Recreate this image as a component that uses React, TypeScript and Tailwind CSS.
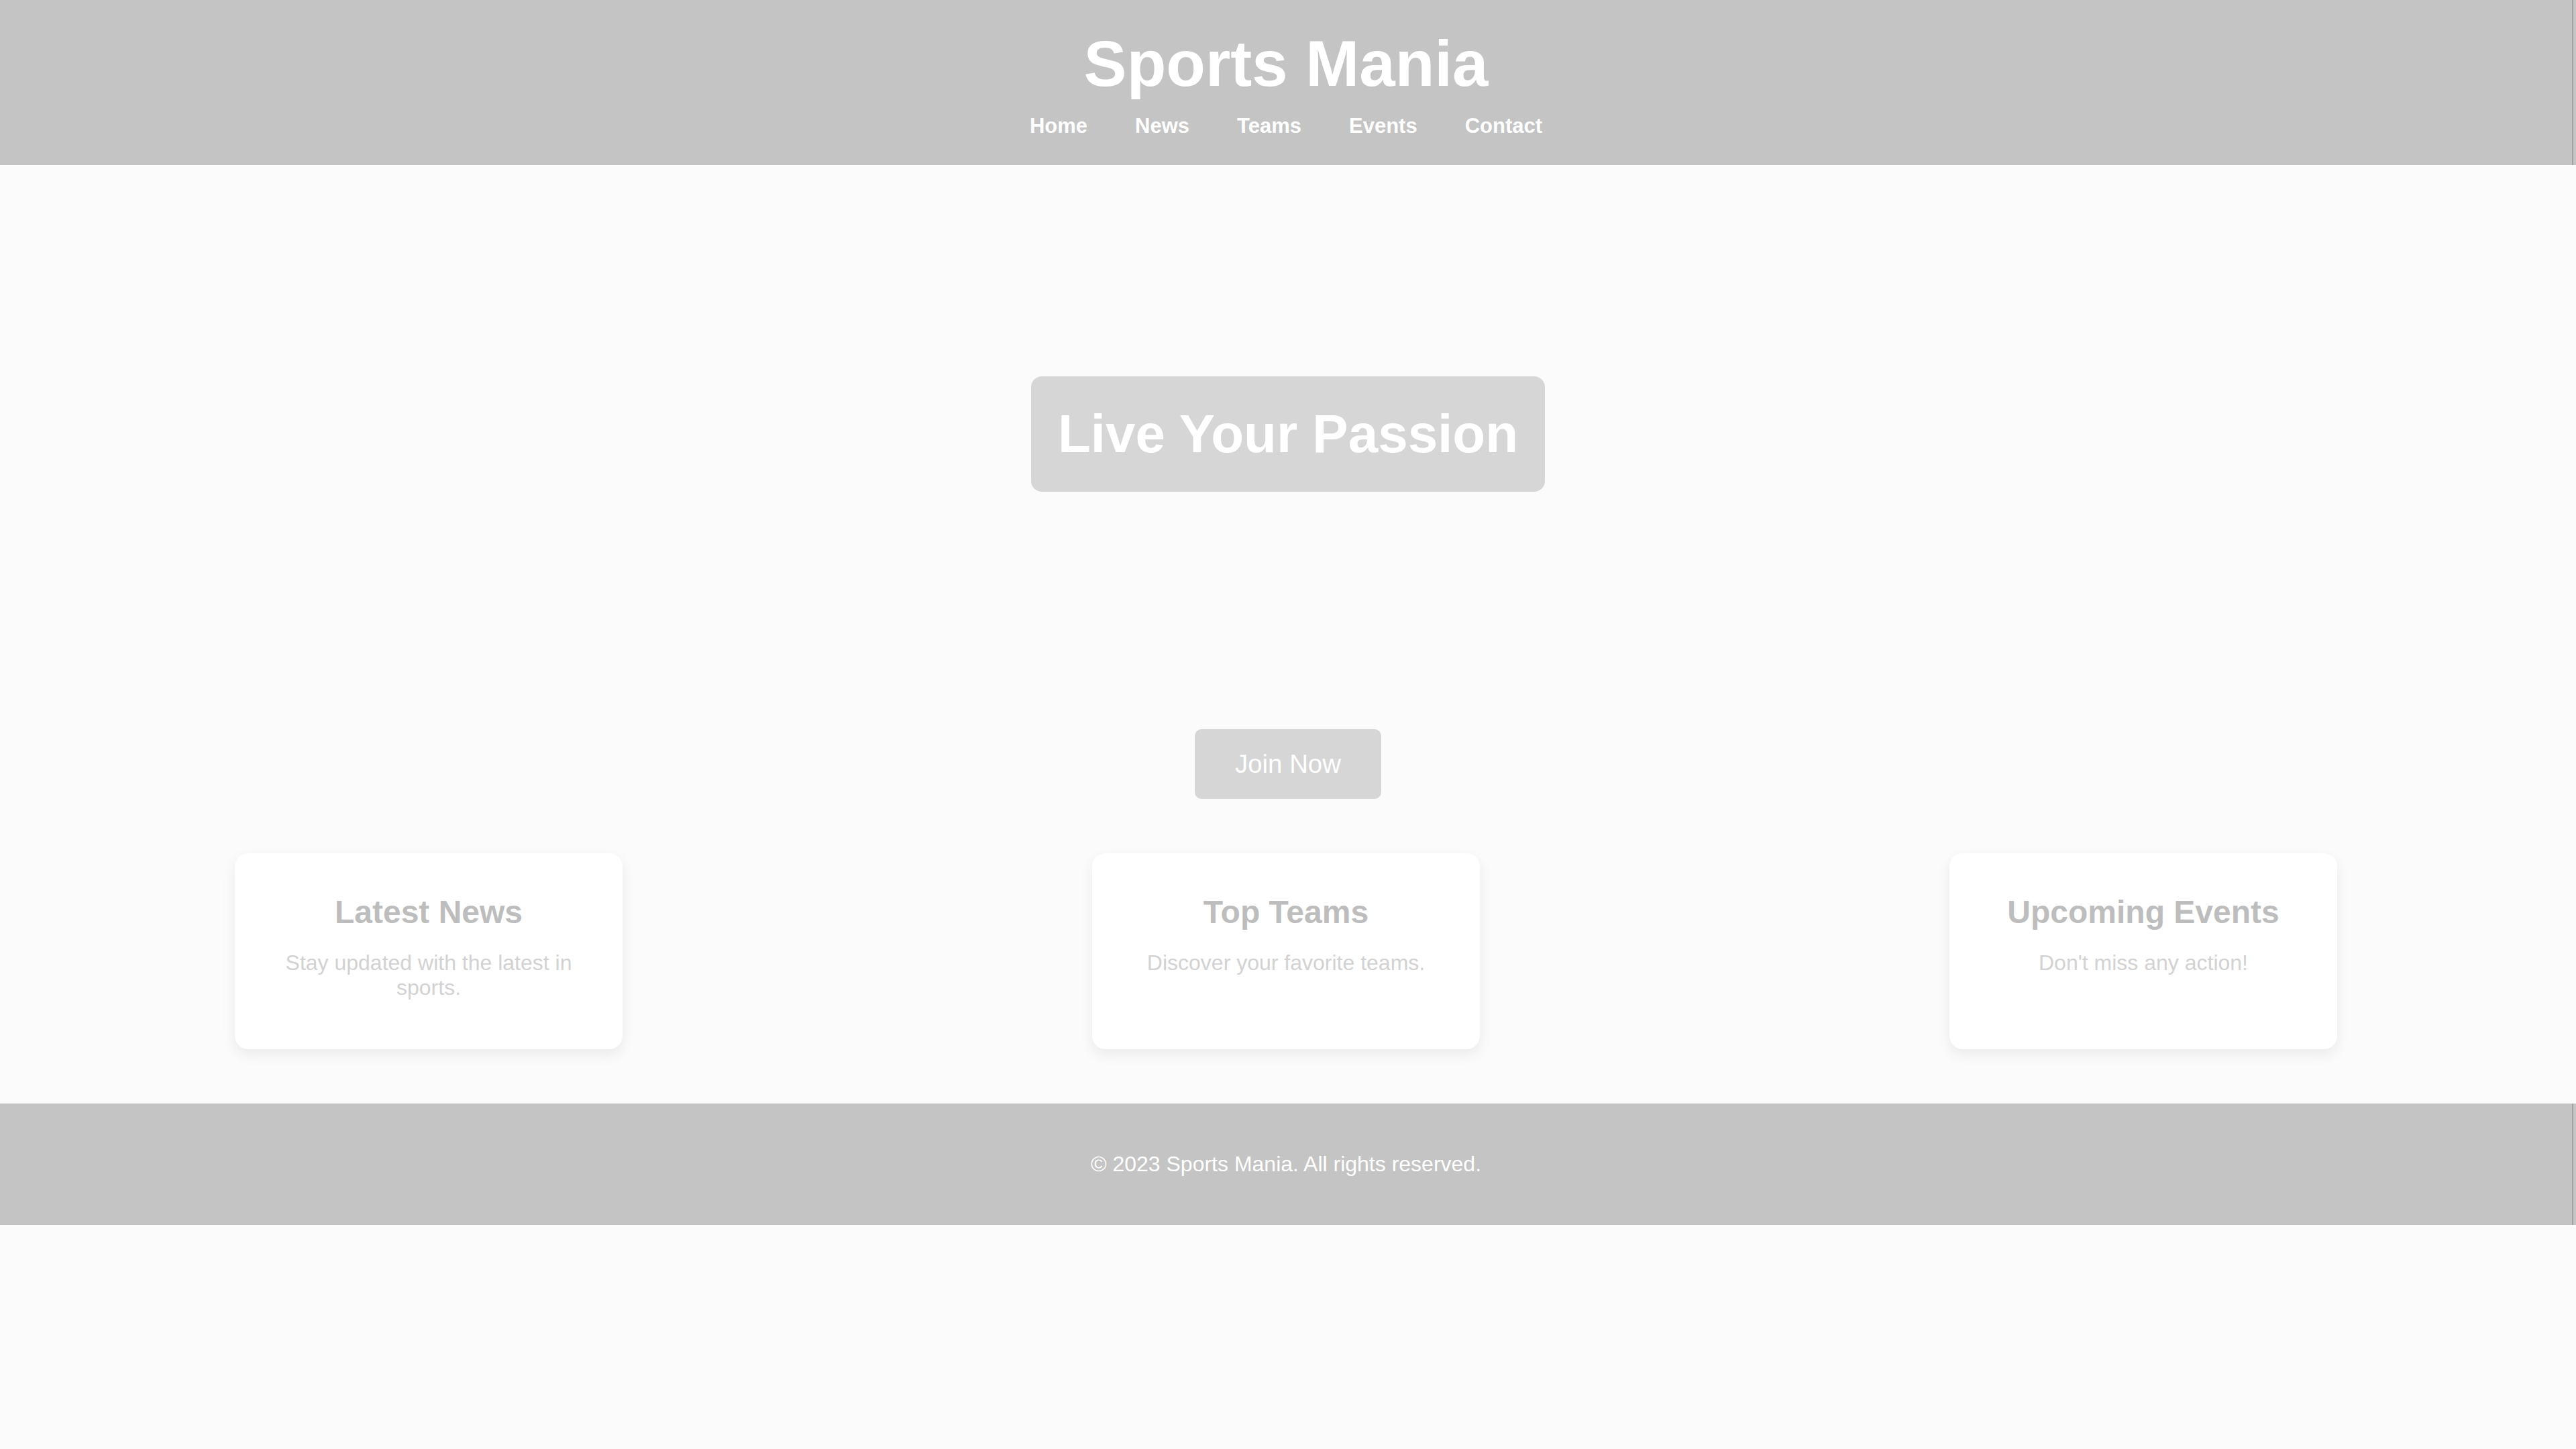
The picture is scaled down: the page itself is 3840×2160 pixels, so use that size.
const navLinks = ['Home', 'News', 'Teams', 'Events', 'Contact'];

const features = [
  { title: 'Latest News', text: 'Stay updated with the latest in sports.' },
  { title: 'Top Teams', text: 'Discover your favorite teams.' },
  { title: 'Upcoming Events', text: "Don't miss any action!" },
];

function Header() {
  return (
    <header className="w-full bg-[#c4c4c4]">
      <div className="flex w-[3836px] flex-col items-center border-r-2 border-[#a3a3a3] pt-[40px] pb-[40px]">
        <h1 className="m-0 text-[96px] leading-[110px] font-bold text-white">Sports Mania</h1>
        <nav className="mt-[20px] flex gap-[71px]">
          {navLinks.map((link) => (
            <a key={link} href="#" className="text-[31px] leading-[36px] font-bold text-white no-underline">
              {link}
            </a>
          ))}
        </nav>
      </div>
    </header>
  );
}

function Hero() {
  return (
    <section className="flex flex-col items-center pt-[315px]">
      <h2 className="m-0 rounded-[16px] bg-[#d6d6d6] px-[40px] py-[40px] text-[80px] leading-[92px] font-bold text-white">
        Live Your Passion
      </h2>
      <button className="mt-[354px] rounded-[10px] bg-[#d6d6d6] px-[60px] py-[30px] text-[38.4px] leading-[44px] text-white">
        Join Now
      </button>
    </section>
  );
}

function FeatureCard({ title, text }: { title: string; text: string }) {
  return (
    <div className="flex w-[578px] flex-col items-center rounded-[20px] bg-white px-[40px] pt-[60px] pb-[73px] text-center shadow-[0_8px_20px_rgba(0,0,0,0.07)]">
      <h3 className="m-0 text-[48px] leading-[55px] font-bold text-[#bdbdbd]">{title}</h3>
      <p className="m-0 mt-[30px] text-[32px] leading-[37px] text-[#d2d2d2]">{text}</p>
    </div>
  );
}

function Footer() {
  return (
    <footer className="w-full bg-[#c4c4c4]">
      <div className="flex w-[3836px] justify-center border-r-2 border-[#a3a3a3] py-[72px]">
        <p className="m-0 text-[32px] leading-[37px] text-white">© 2023 Sports Mania. All rights reserved.</p>
      </div>
    </footer>
  );
}

export default function App() {
  return (
    <div className="min-h-[2160px] w-full bg-[#fbfbfb] font-['Liberation_Sans',Arial,sans-serif]">
      <Header />
      <Hero />
      <section className="mt-[81px] flex w-[3834px] justify-around">
        {features.map((f) => (
          <FeatureCard key={f.title} title={f.title} text={f.text} />
        ))}
      </section>
      <div className="h-[81px]" />
      <Footer />
    </div>
  );
}
